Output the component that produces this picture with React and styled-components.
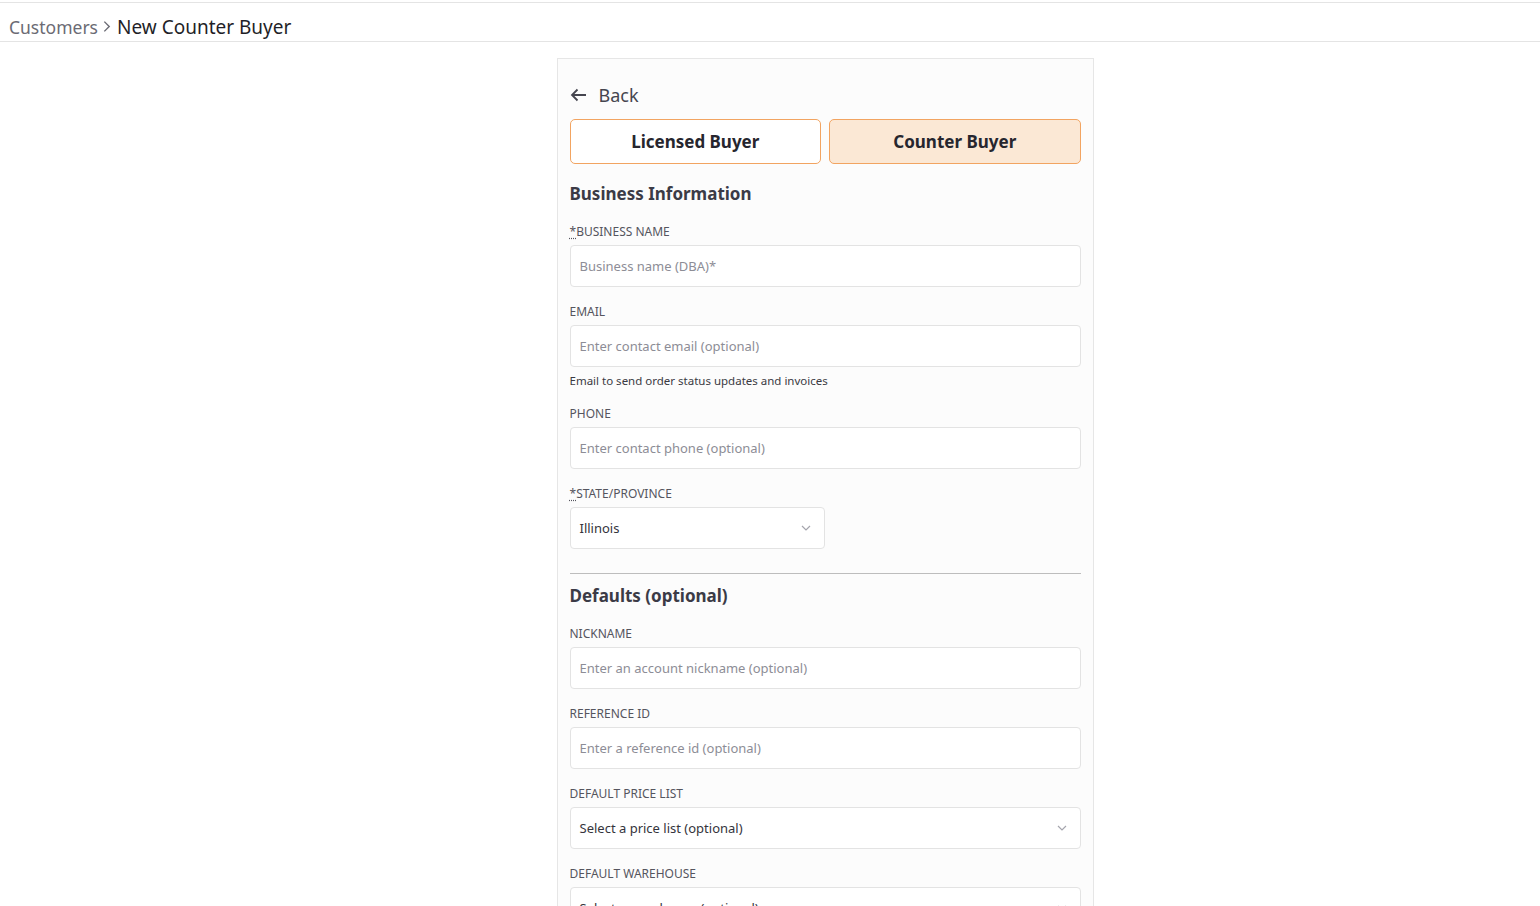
import React from 'react';
import styled, { createGlobalStyle, css } from 'styled-components';

const GlobalStyle = createGlobalStyle`
  html, body {
    margin: 0;
    padding: 0;
    background: #ffffff;
    font-family: "Noto Sans", "Open Sans", sans-serif;
    color: #2b2b33;
  }
  * {
    box-sizing: border-box;
  }
`;

const Page = styled.div`
  padding-top: 2px;
  height: 906px;
  overflow: hidden;
`;

const TopBar = styled.header`
  height: 40px;
  border-top: 1px solid #e4e4e4;
  border-bottom: 1px solid #e4e4e4;
  display: flex;
  align-items: center;
  padding: 9px 9px 0 9px;
  gap: 2px;
`;

const Crumb = styled.span`
  color: ${({ current }) => (current ? '#1f1f28' : '#6b6b74')};
  font-size: ${({ current }) => (current ? '19px' : '17.5px')};
`;

const Chevron = styled.svg`
  width: 13px;
  height: 13px;
  margin: 0 2px 0 0;
`;

const Main = styled.main`
  display: flex;
  justify-content: center;
  padding: 16px 0 0 110px;
`;

const Card = styled.section`
  width: 537px;
  background: #fcfcfc;
  border: 1px solid #e6e6e6;
  padding: 24px 12px 40px 12px;
  display: flex;
  flex-direction: column;
`;

const BackLink = styled.button`
  display: flex;
  align-items: center;
  gap: 12px;
  border: none;
  background: transparent;
  padding: 0;
  font-family: inherit;
  font-size: 18px;
  color: #45454f;
  height: 24px;
  cursor: pointer;
`;

const BuyerTabs = styled.div`
  display: grid;
  grid-template-columns: 1fr 1fr;
  gap: 8px;
  margin-top: 12px;
`;

const BuyerTab = styled.button`
  height: 45px;
  border: 1px solid #f2a461;
  border-radius: 5px;
  background: ${({ active }) => (active ? '#fbe8d5' : '#ffffff')};
  font-family: inherit;
  font-size: 17px;
  font-weight: 700;
  color: #26262e;
  cursor: pointer;
`;

const SectionTitle = styled.h2`
  margin: ${({ first }) => (first ? '18px 0 18px 0' : '10px 0 18px 0')};
  font-size: 17px;
  line-height: 24px;
  font-weight: 700;
  color: #3b3b46;
`;

const Field = styled.div`
  display: flex;
  flex-direction: column;
  margin-bottom: 17px;
  width: ${({ half }) => (half ? '255px' : '100%')};
`;

const Label = styled.label`
  font-size: 12px;
  line-height: 16px;
  color: #55555e;
  text-transform: uppercase;
  margin-bottom: 5px;
`;

const Req = styled.abbr`
  text-decoration: underline dotted;
  text-underline-offset: 2px;
`;

const boxStyle = css`
  height: 42px;
  border: 1px solid #e3e3e3;
  border-radius: 4px;
  background: #ffffff;
  font-family: inherit;
  font-size: 13px;
  padding: 0 9px;
`;

const Input = styled.input`
  ${boxStyle}
  color: #333;
  &::placeholder {
    color: #8d8d96;
  }
`;

const SelectBox = styled.div`
  ${boxStyle}
  display: flex;
  align-items: center;
  justify-content: space-between;
  padding-right: 12px;
  color: #34343c;
`;

const Hint = styled.div`
  font-size: 11.5px;
  line-height: 16px;
  color: #3a3a42;
  margin-top: 6px;
`;

const Divider = styled.hr`
  border: none;
  border-top: 1px solid #bdbdbd;
  margin: 7px 0 0 0;
  width: 100%;
`;

const Caret = () => (
  <svg width="12" height="12" viewBox="0 0 12 12" fill="none">
    <path d="M2 4l4 4 4-4" stroke="#a5a5ad" strokeWidth="1.2" />
  </svg>
);

const Select = ({ value, placeholder }) => (
  <SelectBox>
    <span>{value || placeholder}</span>
    <Caret />
  </SelectBox>
);

export default function App() {
  return (
    <>
      <GlobalStyle />
      <Page>
        <TopBar>
          <Crumb>Customers</Crumb>
          <Chevron viewBox="0 0 12 12" fill="none">
            <path d="M4 1.5l4.5 4.5-4.5 4.5" stroke="#6b6b74" strokeWidth="1.3" />
          </Chevron>
          <Crumb current>New Counter Buyer</Crumb>
        </TopBar>
        <Main>
          <Card>
            <BackLink>
              <svg width="17" height="14" viewBox="0 0 17 14" fill="none">
                <path d="M16 7H2M7.5 1.5L2 7l5.5 5.5" stroke="#45454f" strokeWidth="1.8" />
              </svg>
              Back
            </BackLink>
            <BuyerTabs>
              <BuyerTab>Licensed Buyer</BuyerTab>
              <BuyerTab active>Counter Buyer</BuyerTab>
            </BuyerTabs>

            <SectionTitle first>Business Information</SectionTitle>
            <Field>
              <Label><Req>*</Req>Business Name</Label>
              <Input placeholder="Business name (DBA)*" />
            </Field>
            <Field>
              <Label>Email</Label>
              <Input placeholder="Enter contact email (optional)" />
              <Hint>Email to send order status updates and invoices</Hint>
            </Field>
            <Field>
              <Label>Phone</Label>
              <Input placeholder="Enter contact phone (optional)" />
            </Field>
            <Field half>
              <Label><Req>*</Req>State/Province</Label>
              <Select value="Illinois" />
            </Field>

            <Divider />
            <SectionTitle>Defaults (optional)</SectionTitle>
            <Field>
              <Label>Nickname</Label>
              <Input placeholder="Enter an account nickname (optional)" />
            </Field>
            <Field>
              <Label>Reference ID</Label>
              <Input placeholder="Enter a reference id (optional)" />
            </Field>
            <Field>
              <Label>Default Price List</Label>
              <Select placeholder="Select a price list (optional)" />
            </Field>
            <Field>
              <Label>Default Warehouse</Label>
              <Select placeholder="Select a warehouse (optional)" />
            </Field>
          </Card>
        </Main>
      </Page>
    </>
  );
}
